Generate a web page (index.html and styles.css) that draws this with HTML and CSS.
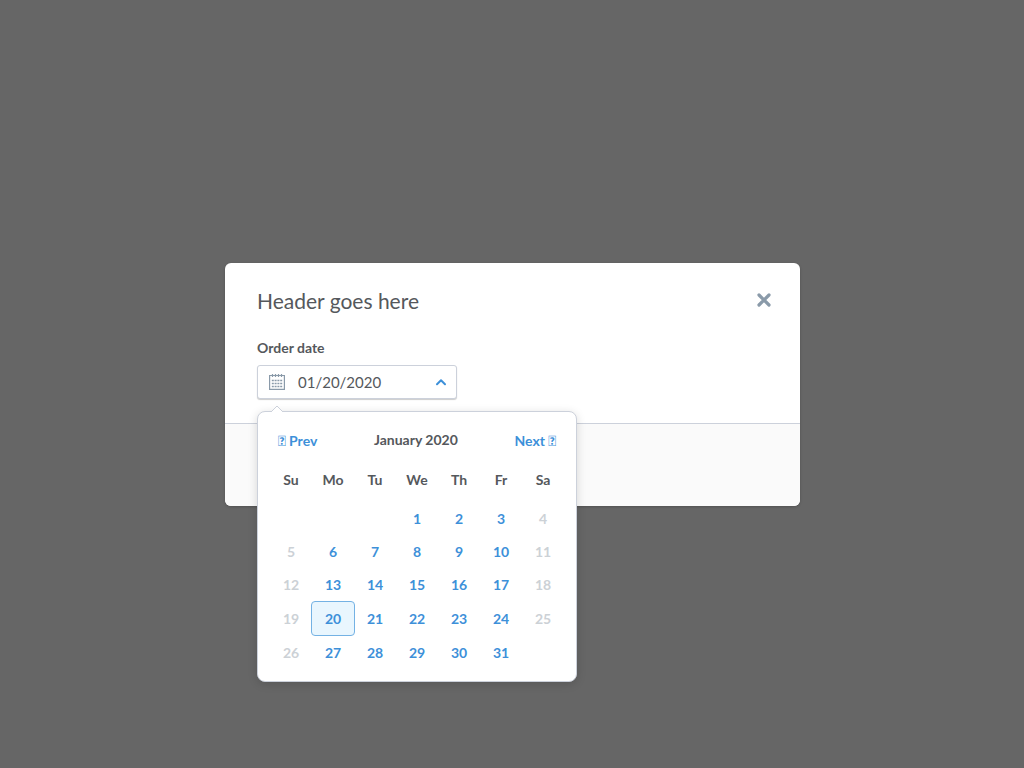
FILE: index.html
```html
<!DOCTYPE html>
<html lang="en">
<head>
<meta charset="utf-8">
<meta name="viewport" content="width=device-width, initial-scale=1">
<title>Order date</title>
<link rel="stylesheet" href="styles.css">
</head>
<body>
<div class="overlay">
  <section class="modal" role="dialog" aria-modal="true" aria-labelledby="modal-title">
    <header class="modal-header">
      <h1 class="modal-title" id="modal-title">Header goes here</h1>
      <button class="modal-close" type="button" aria-label="Close">
        <svg width="14" height="14" viewBox="0 0 14 14" aria-hidden="true"><path d="M2 2l10 10M12 2L2 12" fill="none" stroke="currentColor" stroke-width="3.200" stroke-linecap="round"/></svg>
      </button>
    </header>
    <div class="modal-body">
      <label class="field-label" for="order-date">Order date</label>
      <div class="date-field">
        <div class="date-control">
          <svg class="calendar-icon" width="16" height="16" viewBox="0 0 16 16" aria-hidden="true">
            <path d="M.6 1.500h14.800v13.900H.6z" fill="none" stroke="currentColor" stroke-width="1.200"/>
            <path d="M3.500 0v3M6.500 0v3M9.500 0v3M12.500 0v3" stroke="currentColor" stroke-width="1.200"/>
            <path d="M2.800 6.500h2M5.600 6.500h2M8.400 6.500h2M11.200 6.500h2M2.800 9.500h2M5.600 9.500h2M8.400 9.500h2M11.200 9.500h2M2.800 12.500h2M5.600 12.500h2M8.400 12.500h2M11.200 12.500h2" fill="none" stroke="currentColor" stroke-width="1.400"/>
          </svg>
          <input class="date-input" id="order-date" type="text" value="01/20/2020">
          <button class="date-toggle" type="button" aria-label="Close calendar">
            <svg width="12" height="8" viewBox="0 0 12 8" aria-hidden="true"><path d="M2 6.200l4-4 4 4" fill="none" stroke="currentColor" stroke-width="2" stroke-linecap="round" stroke-linejoin="round"/></svg>
          </button>
        </div>
        <div class="calendar">
          <svg class="calendar-arrow" width="14" height="8" viewBox="0 0 14 8" aria-hidden="true"><path d="M0 8L1 7 7 1l6 6 1 1z" fill="#fff"/><path d="M1 7L7 1l6 6" fill="none" stroke="#ccd1db"/></svg>
          <div class="calendar-nav">
            <button class="nav-button" type="button">&#xe91a; Prev</button>
            <h2 class="calendar-title">January 2020</h2>
            <button class="nav-button" type="button">Next &#xe91b;</button>
          </div>
          <table class="days">
            <thead><tr><th>Su</th><th>Mo</th><th>Tu</th><th>We</th><th>Th</th><th>Fr</th><th>Sa</th></tr></thead>
            <tbody>
              <tr><td></td><td></td><td></td><td><button class="day" type="button">1</button></td><td><button class="day" type="button">2</button></td><td><button class="day" type="button">3</button></td><td><button class="day" type="button" disabled>4</button></td></tr>
              <tr><td><button class="day" type="button" disabled>5</button></td><td><button class="day" type="button">6</button></td><td><button class="day" type="button">7</button></td><td><button class="day" type="button">8</button></td><td><button class="day" type="button">9</button></td><td><button class="day" type="button">10</button></td><td><button class="day" type="button" disabled>11</button></td></tr>
              <tr><td><button class="day" type="button" disabled>12</button></td><td><button class="day" type="button">13</button></td><td><button class="day" type="button">14</button></td><td><button class="day" type="button">15</button></td><td><button class="day" type="button">16</button></td><td><button class="day" type="button">17</button></td><td><button class="day" type="button" disabled>18</button></td></tr>
              <tr><td><button class="day" type="button" disabled>19</button></td><td><button class="day day-selected" type="button" aria-pressed="true">20</button></td><td><button class="day" type="button">21</button></td><td><button class="day" type="button">22</button></td><td><button class="day" type="button">23</button></td><td><button class="day" type="button">24</button></td><td><button class="day" type="button" disabled>25</button></td></tr>
              <tr><td><button class="day" type="button" disabled>26</button></td><td><button class="day" type="button">27</button></td><td><button class="day" type="button">28</button></td><td><button class="day" type="button">29</button></td><td><button class="day" type="button">30</button></td><td><button class="day" type="button">31</button></td><td></td></tr>
            </tbody>
          </table>
        </div>
      </div>
    </div>
    <footer class="modal-footer"></footer>
  </section>
</div>
</body>
</html>
```
FILE: styles.css
```css
* { box-sizing: border-box; }

body {
  margin: 0;
  background: #666;
  color: #55585c;
  font-family: Lato, sans-serif;
  font-size: 14px;
  line-height: 20px;
}

button {
  padding: 0;
  border: 0;
  background: none;
  color: inherit;
  font: inherit;
  cursor: pointer;
}

.overlay {
  display: flex;
  align-items: center;
  justify-content: center;
  min-height: 100vh;
  padding: 1px 0 0 1px;
}

.modal {
  width: 100%;
  max-width: 575px;
  border-radius: 6px;
  background: #fff;
  box-shadow: 0 1px 3px rgba(0, 0, 0, 0.2);
}

.modal-header {
  display: flex;
  align-items: flex-start;
  justify-content: space-between;
  padding: 24px 28px 12px 32px;
}

.modal-title {
  margin: 0;
  font-size: 21px;
  font-weight: 400;
  line-height: 28px;
}

.modal-close {
  display: flex;
  padding: 6px 1px;
  color: #8a9aa9;
}

.modal-body { padding: 11px 32px 24px; }

.modal-footer {
  height: 83px;
  border-top: 1px solid #ccd1db;
  border-radius: 0 0 6px 6px;
  background: #fafafa;
}

.field-label {
  display: block;
  margin-bottom: 7px;
  font-weight: 700;
}

.date-field {
  position: relative;
  width: 200px;
}

.date-control {
  display: flex;
  align-items: center;
  height: 34px;
  padding: 0 9px 0 11px;
  border: 1px solid #ccd1db;
  border-radius: 3px;
  background: #fff;
  box-shadow: 0 1px 1px rgba(0, 0, 0, 0.2);
}

.calendar-icon {
  flex: none;
  color: #8a9aa9;
}

.date-input {
  flex: 1;
  min-width: 0;
  padding: 0 0 0 13px;
  border: 0;
  outline: 0;
  background: none;
  color: inherit;
  font: inherit;
  font-size: 15px;
}

.date-toggle {
  display: flex;
  color: #3d90d9;
}

.calendar {
  position: absolute;
  top: 46px;
  left: 0;
  width: 320px;
  padding: 18px 12px 12px;
  border: 1px solid #ccd1db;
  border-radius: 8px;
  background: #fff;
  box-shadow: 0 2px 10px rgba(0, 0, 0, 0.15);
}

.calendar-arrow {
  position: absolute;
  top: -7px;
  left: 12px;
}

.calendar-nav {
  display: flex;
  align-items: flex-start;
  justify-content: space-between;
  padding: 0 8px;
}

.calendar-title {
  margin: 0;
  font-size: 14px;
  font-weight: 700;
}

.nav-button {
  padding-top: 1px;
  color: #3d90d9;
  font-weight: 700;
}

.days {
  width: 100%;
  margin-top: 7px;
  border-collapse: collapse;
  table-layout: fixed;
  text-align: center;
}

.days th {
  height: 44px;
  padding: 0;
}

.days td { padding: 0; }

.day {
  display: block;
  width: 100%;
  height: 33px;
  color: #3d90d9;
  font-weight: 700;
}

.day:disabled {
  color: #ccd1d6;
  cursor: default;
}

.day-selected {
  width: 44px;
  height: 35px;
  margin: 0 -1px;
  border: 1px solid #74b2e4;
  border-radius: 4px;
  background: #e9f6fe;
}
```
